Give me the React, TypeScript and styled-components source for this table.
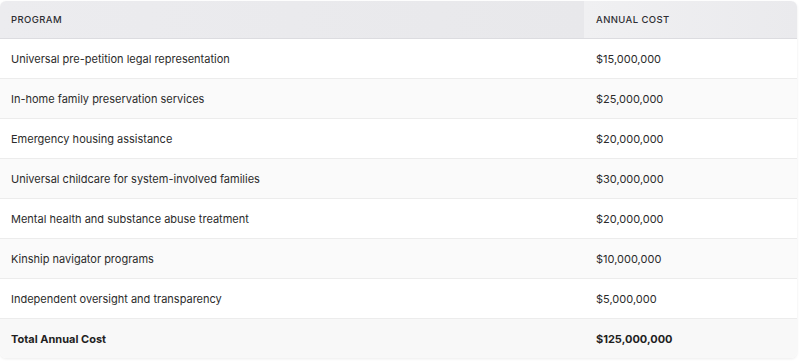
import styled, { createGlobalStyle } from "styled-components";

const GlobalStyle = createGlobalStyle`
  body {
    margin: 0;
    background: #ffffff;
    font-family: Inter, "Liberation Sans", sans-serif;
  }
`;

const rows = [
  { program: "Universal pre-petition legal representation", cost: "$15,000,000" },
  { program: "In-home family preservation services", cost: "$25,000,000" },
  { program: "Emergency housing assistance", cost: "$20,000,000" },
  { program: "Universal childcare for system-involved families", cost: "$30,000,000" },
  { program: "Mental health and substance abuse treatment", cost: "$20,000,000" },
  { program: "Kinship navigator programs", cost: "$10,000,000" },
  { program: "Independent oversight and transparency", cost: "$5,000,000" },
];

const App = () => {
  return (
    <>
      <GlobalStyle />
      <Wrapper>
        <Table>
          <thead>
            <tr>
              <HeadCell $first>Program</HeadCell>
              <HeadCell>Annual Cost</HeadCell>
            </tr>
          </thead>
          <tbody>
            {rows.map((r) => (
              <Row key={r.program}>
                <Cell>{r.program}</Cell>
                <Cell>{r.cost}</Cell>
              </Row>
            ))}
            <TotalRow>
              <Cell>Total Annual Cost</Cell>
              <Cell>$125,000,000</Cell>
            </TotalRow>
          </tbody>
        </Table>
      </Wrapper>
    </>
  );
};

const Wrapper = styled.div`
  padding: 1px 2px 6px 0;
`;

const Table = styled.table`
  width: 100%;
  border-collapse: separate;
  border-spacing: 0;
  border-radius: 6px;
  overflow: hidden;
  box-shadow: 0 1px 3px rgba(0, 0, 0, 0.08);
  background: #ffffff;
`;

const HeadCell = styled.th<{ $first?: boolean }>`
  height: 38px;
  padding: 0 11px 1px;
  width: ${(p) => (p.$first ? "584px" : "auto")};
  box-sizing: border-box;
  text-align: left;
  font-size: 9.5px;
  font-weight: 500;
  letter-spacing: 0.4px;
  text-transform: uppercase;
  color: #2e2e33;
  background: ${(p) =>
    p.$first
      ? "linear-gradient(90deg, #ececef, #e8e8eb)"
      : "linear-gradient(90deg, #f0f0f2, #eaeaed)"};
  border-bottom: 1px solid #dcdce0;

  &:last-child {
    padding-left: 12px;
  }
`;

const Cell = styled.td`
  height: 39px;
  padding: 0 11px;
  font-size: 11px;
  color: #2b2b2b;
  border-bottom: 1px solid #ececec;

  &:last-child {
    padding-left: 12px;
  }
`;

const Row = styled.tr`
  &:nth-child(even) td {
    background: #fafafa;
  }
`;

const TotalRow = styled.tr`
  td {
    background: #f8f8f8;
    font-weight: 700;
    color: #1f1f1f;
    border-bottom: none;
    height: 39px;
  }
`;

export default App;
